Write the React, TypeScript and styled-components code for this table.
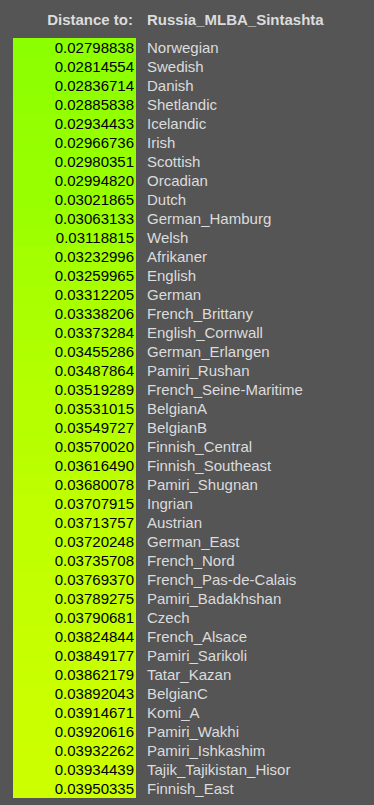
import React from 'react'
import styled, { createGlobalStyle } from 'styled-components'

const GlobalStyle = createGlobalStyle`
  html, body {
    margin: 0;
    padding: 0;
    background: #555555;
  }
  body {
    font-family: "Liberation Sans", Arial, sans-serif;
  }
`

const rows: [number, string][] = [
  [0.02798838, 'Norwegian'],
  [0.02814554, 'Swedish'],
  [0.02836714, 'Danish'],
  [0.02885838, 'Shetlandic'],
  [0.02934433, 'Icelandic'],
  [0.02966736, 'Irish'],
  [0.02980351, 'Scottish'],
  [0.0299482, 'Orcadian'],
  [0.03021865, 'Dutch'],
  [0.03063133, 'German_Hamburg'],
  [0.03118815, 'Welsh'],
  [0.03232996, 'Afrikaner'],
  [0.03259965, 'English'],
  [0.03312205, 'German'],
  [0.03338206, 'French_Brittany'],
  [0.03373284, 'English_Cornwall'],
  [0.03455286, 'German_Erlangen'],
  [0.03487864, 'Pamiri_Rushan'],
  [0.03519289, 'French_Seine-Maritime'],
  [0.03531015, 'BelgianA'],
  [0.03549727, 'BelgianB'],
  [0.0357002, 'Finnish_Central'],
  [0.0361649, 'Finnish_Southeast'],
  [0.03680078, 'Pamiri_Shugnan'],
  [0.03707915, 'Ingrian'],
  [0.03713757, 'Austrian'],
  [0.03720248, 'German_East'],
  [0.03735708, 'French_Nord'],
  [0.0376937, 'French_Pas-de-Calais'],
  [0.03789275, 'Pamiri_Badakhshan'],
  [0.03790681, 'Czech'],
  [0.03824844, 'French_Alsace'],
  [0.03849177, 'Pamiri_Sarikoli'],
  [0.03862179, 'Tatar_Kazan'],
  [0.03892043, 'BelgianC'],
  [0.03914671, 'Komi_A'],
  [0.03920616, 'Pamiri_Wakhi'],
  [0.03932262, 'Pamiri_Ishkashim'],
  [0.03934439, 'Tajik_Tajikistan_Hisor'],
  [0.03950335, 'Finnish_East'],
]

const Page = styled.div`
  padding: 8px 0 0 13px;
`

const Table = styled.div`
  display: grid;
  grid-template-columns: 123px auto;
  font-size: 15px;
  color: #dcdcdc;
`

const HeadCell = styled.div<{ align: 'left' | 'right' }>`
  height: 30px;
  line-height: 23px;
  font-weight: bold;
  text-align: ${({ align }) => align};
  padding: ${({ align }) => (align === 'right' ? '0 3px 0 0' : '0 0 0 11px')};
  white-space: nowrap;
`

const DistCell = styled.div`
  height: 19px;
  line-height: 19px;
  text-align: right;
  padding-right: 2px;
  color: #000;
`

const NameCell = styled.div`
  height: 19px;
  line-height: 19px;
  padding-left: 11px;
  white-space: nowrap;
`

const min = rows[0][0]
const max = rows[rows.length - 1][0]

// red channel goes from 140 to 204 as the distance grows
function shade(v: number) {
  const t = (v - min) / (max - min)
  const r = Math.round(140 + t * 64)
  return `rgb(${r}, 255, 0)`
}

export default function App() {
  return (
    <Page>
      <GlobalStyle />
      <Table>
        <HeadCell align="right">Distance to:</HeadCell>
        <HeadCell align="left">Russia_MLBA_Sintashta</HeadCell>
        {rows.map(([d, name]) => (
          <React.Fragment key={name}>
            <DistCell style={{ background: shade(d) }}>{d.toFixed(8)}</DistCell>
            <NameCell>{name}</NameCell>
          </React.Fragment>
        ))}
      </Table>
    </Page>
  )
}
